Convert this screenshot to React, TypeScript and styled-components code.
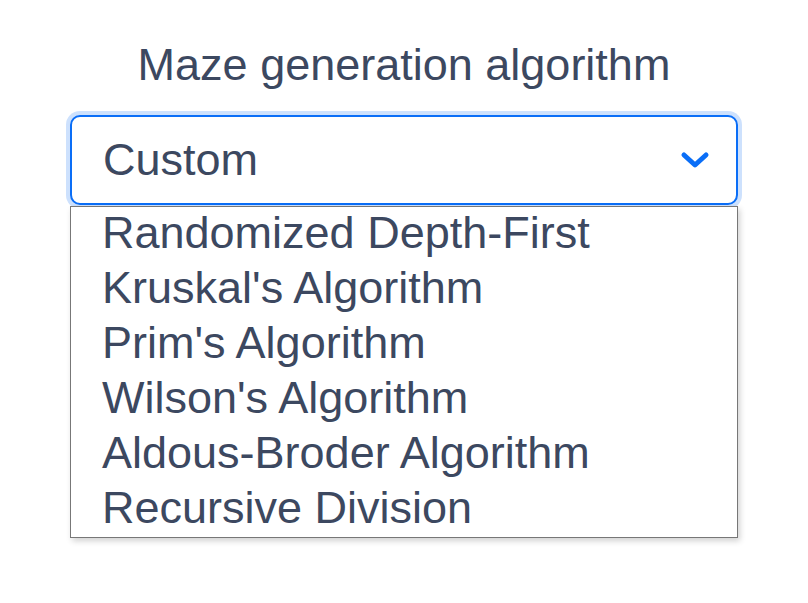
import React from "react";
import styled, { createGlobalStyle } from "styled-components";

const Global = createGlobalStyle`
  html, body { margin: 0; padding: 0; background: #ffffff; }
  body { font-family: "Liberation Sans", Arial, sans-serif; }
`;

const Page = styled.div`
  width: 808px;
  height: 603px;
  box-sizing: border-box;
  padding: 39px 70px 0;
  display: flex;
  flex-direction: column;
  align-items: stretch;
  color: #3c4860;
`;

const Label = styled.div`
  font-size: 45px;
  line-height: 52px;
  text-align: center;
`;

const Field = styled.div`
  position: relative;
  margin-top: 24px;
`;

const SelectBox = styled.div`
  box-sizing: border-box;
  height: 90px;
  border: 2px solid #0a6ef7;
  border-radius: 10px;
  box-shadow: 0 0 0 4px #cde1fd;
  display: flex;
  align-items: center;
  justify-content: space-between;
  padding: 0 25px 0 31px;
  font-size: 45px;
  background: #ffffff;
`;

const Value = styled.span`
  line-height: 52px;
`;

const Chevron = styled.svg`
  width: 32px;
  height: 20px;
  display: block;
  color: #0a6ef7;
`;

const Menu = styled.ul`
  position: absolute;
  left: 0;
  right: 0;
  top: calc(100% + 1px);
  margin: 0;
  padding: 0;
  list-style: none;
  background: #ffffff;
  border: 1px solid #777777;
  box-shadow: 2px 3px 6px rgba(0, 0, 0, 0.18);
`;

const Item = styled.li`
  box-sizing: border-box;
  height: 55px;
  line-height: 51px;
  padding: 0 0 4px 31px;
  font-size: 45px;
  white-space: nowrap;
`;

const options = [
  "Randomized Depth-First",
  "Kruskal's Algorithm",
  "Prim's Algorithm",
  "Wilson's Algorithm",
  "Aldous-Broder Algorithm",
  "Recursive Division",
];

export default function App() {
  return (
    <>
      <Global />
      <Page>
        <Label>Maze generation algorithm</Label>
        <Field>
          <SelectBox>
            <Value>Custom</Value>
            <Chevron viewBox="0 0 32 20" fill="none">
              <polyline
                points="5,5 16,15 27,5"
                stroke="currentColor"
                strokeWidth="5"
                strokeLinecap="round"
                strokeLinejoin="round"
              />
            </Chevron>
          </SelectBox>
          <Menu>
            {options.map((o) => (
              <Item key={o}>{o}</Item>
            ))}
          </Menu>
        </Field>
      </Page>
    </>
  );
}
